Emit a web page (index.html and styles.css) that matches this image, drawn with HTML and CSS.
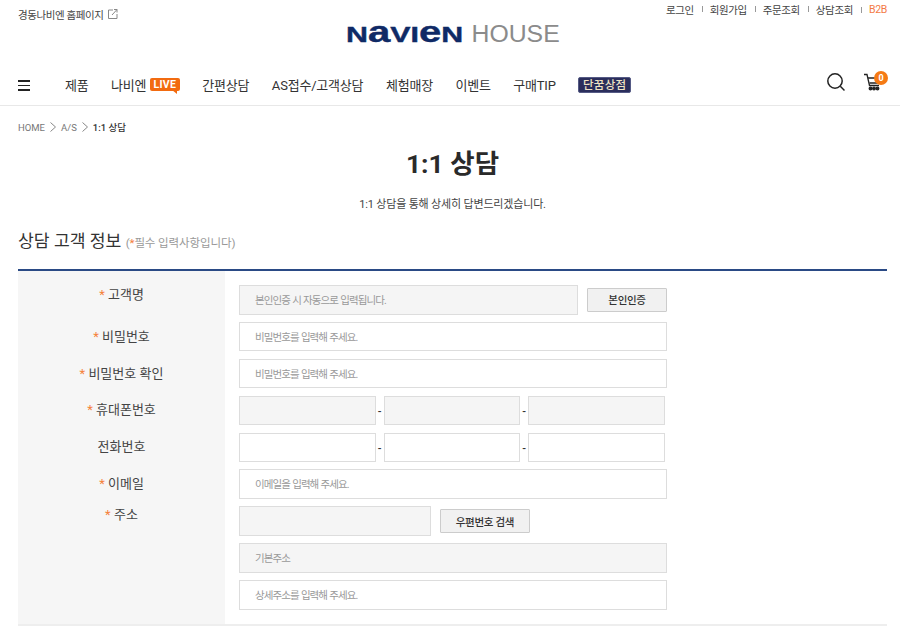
FILE: index.html
```html
<!DOCTYPE html>
<html lang="ko">
<head>
<meta charset="utf-8">
<title>1:1 상담</title>
<link rel="stylesheet" href="styles.css">
</head>
<body>
<header class="site-header">
  <div class="top">
    <a class="home-link">경동나비엔 홈페이지
      <svg class="ext" width="10" height="10" viewBox="0 0 10 10" fill="none" stroke="#888" stroke-width="1"><path d="M5 1H.5v8.500h8.500V5M4 6l5-5.500M6 .5h3v3"/></svg>
    </a>
    <a class="logo"><span class="logo-navien">N<span class="lc">a</span>VI<span class="lc">e</span>N</span><span class="logo-house">HOUSE</span></a>
    <ul class="util">
      <li>로그인</li><li>회원가입</li><li>주문조회</li><li>상담조회</li><li class="b2b">B2B</li>
    </ul>
  </div>
  <nav class="nav">
    <span class="burger"><i></i><i></i><i></i></span>
    <ul class="menu">
      <li>제품</li>
      <li class="live-item">나비엔<span class="live">LIVE</span></li>
      <li>간편상담</li>
      <li>AS접수/고객상담</li>
      <li>체험매장</li>
      <li>이벤트</li>
      <li>구매TIP</li>
      <li><span class="dream">단꿈상점</span></li>
    </ul>
    <div class="nav-icons">
      <svg class="search" width="20" height="20" viewBox="0 0 20 20" fill="none" stroke="#222" stroke-width="1.500"><circle cx="8" cy="8" r="7.200"/><path d="M13.300 13.300l4.200 4.200"/></svg>
      <span class="cart">
        <svg width="18" height="19" viewBox="0 0 18 19" fill="none" stroke="#222" stroke-width="1.300"><path d="M0 1.500h3l2.500 11h9.500"/><path d="M4 5h12.500l-1.500 5H5.500"/><circle cx="6.500" cy="15.500" r="1.300" fill="#222"/><circle cx="10" cy="15.500" r="1.300" fill="#222"/><circle cx="13.500" cy="15.500" r="1.300" fill="#222"/></svg>
        <b class="badge">0</b>
      </span>
    </div>
  </nav>
</header>
<main class="content">
  <ol class="crumbs">
    <li>HOME</li>
    <li class="sep"><svg width="6" height="10" viewBox="0 0 6 10" fill="none" stroke="#888"><path d="M.5.5l5 4.500-5 4.500"/></svg></li>
    <li>A/S</li>
    <li class="sep"><svg width="6" height="10" viewBox="0 0 6 10" fill="none" stroke="#888"><path d="M.5.5l5 4.500-5 4.500"/></svg></li>
    <li class="current">1:1 상담</li>
  </ol>
  <h1 class="title">1:1 상담</h1>
  <p class="lead">1:1 상담을 통해 상세히 답변드리겠습니다.</p>
  <h2 class="section">상담 고객 정보 <small>(<em>*</em>필수 입력사항입니다)</small></h2>
  <form class="form">
    <div class="row row-first">
      <label class="label"><em>*</em> 고객명</label>
      <div class="field">
        <input class="input w-name gray" placeholder="본인인증 시 자동으로 입력됩니다.">
        <button type="button" class="btn btn-auth">본인인증</button>
      </div>
    </div>
    <div class="row">
      <label class="label"><em>*</em> 비밀번호</label>
      <div class="field"><input class="input w-full" placeholder="비밀번호를 입력해 주세요."></div>
    </div>
    <div class="row">
      <label class="label"><em>*</em> 비밀번호 확인</label>
      <div class="field"><input class="input w-full" placeholder="비밀번호를 입력해 주세요."></div>
    </div>
    <div class="row">
      <label class="label"><em>*</em> 휴대폰번호</label>
      <div class="field phone">
        <input class="input gray"><span class="dash">-</span><input class="input gray"><span class="dash">-</span><input class="input gray">
      </div>
    </div>
    <div class="row">
      <label class="label">전화번호</label>
      <div class="field phone">
        <input class="input"><span class="dash">-</span><input class="input"><span class="dash">-</span><input class="input">
      </div>
    </div>
    <div class="row">
      <label class="label"><em>*</em> 이메일</label>
      <div class="field"><input class="input w-full" placeholder="이메일을 입력해 주세요."></div>
    </div>
    <div class="row row-address">
      <label class="label"><em>*</em> 주소</label>
      <div class="field-stack">
        <div class="field">
          <input class="input w-zip gray">
          <button type="button" class="btn btn-zip">우편번호 검색</button>
        </div>
        <input class="input w-full gray" placeholder="기본주소">
        <input class="input w-full" placeholder="상세주소를 입력해 주세요.">
      </div>
    </div>
  </form>
</main>
</body>
</html>
```
FILE: styles.css
```css
* { box-sizing: border-box; }
html, body { margin: 0; padding: 0; }
body {
  width: 900px;
  height: 634px;
  overflow: hidden;
  background: #fff;
  color: #333;
  font-family: Roboto, "Noto Sans CJK KR", sans-serif;
}
ul, ol { list-style: none; margin: 0; padding: 0; }

.site-header { height: 106px; border-bottom: 1px solid #e8e8e8; }
.top {
  display: grid;
  grid-template-columns: 1fr 216px 1fr;
  height: 62px;
  padding: 0 13px 0 18px;
}
.home-link {
  display: flex;
  align-items: center;
  gap: 3px;
  height: 12px;
  margin-top: 8px;
  font-size: 10.5px;
  letter-spacing: -0.4px;
  color: #444;
  white-space: nowrap;
}
.ext { margin-left: 1px; }
.logo {
  display: flex;
  align-items: center;
  justify-content: flex-start;
  height: 24px;
  margin-top: 23px;
  white-space: nowrap;
}
.logo-navien {
  display: inline-block;
  flex: none;
  width: 126px;
  margin-left: 1px;
  font: 700 22px/24px "Liberation Sans", sans-serif;
  color: #0f2a66;
  -webkit-text-stroke: 0.4px #0f2a66;
  transform: scaleX(1.38);
  transform-origin: left center;
}
.logo-navien .lc { font-size: 29px; line-height: 0; }
.logo-house {
  margin-top: -2px;
  font: 400 24.8px/24px "Liberation Sans", sans-serif;
  color: #8b8b8b;
}
.util {
  display: flex;
  justify-content: flex-end;
  align-items: center;
  height: 12px;
  margin-top: 3px;
  font-size: 10.5px;
  letter-spacing: -0.4px;
  color: #444;
}
.util li { white-space: nowrap; }
.util li + li { margin-left: 8px; padding-left: 8px; position: relative; }
.util li + li::before {
  content: "";
  position: absolute;
  left: 0;
  top: 4px;
  width: 1px;
  height: 6px;
  background: #999;
}
.util .b2b { color: #f47a45; letter-spacing: -0.3px; }

.nav {
  display: flex;
  align-items: center;
  height: 43px;
  padding: 0 12px 0 18px;
}
.burger {
  display: flex;
  flex-direction: column;
  gap: 3px;
  width: 12px;
  margin-top: 4px;
  margin-right: 35px;
}
.burger i { display: block; height: 1.5px; background: #222; }
.menu {
  display: flex;
  align-items: center;
  gap: 22.5px;
  margin-top: 2px;
  font-size: 13px;
  letter-spacing: -0.2px;
  color: #333;
  white-space: nowrap;
}
.live-item { display: flex; align-items: center; gap: 3.5px; }
.live {
  position: relative;
  display: block;
  width: 30px;
  height: 13px;
  border-radius: 2px;
  background: #f26b10;
  color: #fff;
  font-size: 10.5px;
  font-weight: 700;
  line-height: 13px;
  text-align: center;
  letter-spacing: 0.3px;
  margin-top: -1px;
}
.live::after {
  content: "";
  position: absolute;
  right: 3px;
  bottom: -3px;
  border-top: 4px solid #f26b10;
  border-left: 5px solid transparent;
}
.dream {
  display: block;
  width: 53px;
  height: 16px;
  border: 1px solid #555a85;
  border-radius: 2px;
  background: #2b2e5c;
  color: #efe3c4;
  font-size: 11.5px;
  font-weight: 500;
  line-height: 14px;
  text-align: center;
  letter-spacing: 0.3px;
}
.nav-icons { display: flex; align-items: flex-start; gap: 17px; margin-left: auto; margin-top: -2px; }
.cart { position: relative; display: block; width: 24px; height: 20px; }
.cart svg { display: block; }
.badge {
  position: absolute;
  right: 0;
  top: -2px;
  width: 14px;
  height: 14px;
  border-radius: 50%;
  background: #f57a14;
  color: #fff;
  font-size: 9px;
  line-height: 14px;
  text-align: center;
}

.content { padding: 0 13px 0 18px; }
.crumbs {
  display: flex;
  align-items: center;
  gap: 5px;
  height: 12px;
  margin-top: 15px;
  font-size: 9.5px;
  color: #777;
}
.crumbs .sep { display: flex; }
.crumbs .current { color: #333; font-weight: 500; }
.title {
  margin: 13px 0 0;
  font-size: 26.5px;
  font-weight: 700;
  line-height: 36px;
  text-align: center;
  letter-spacing: 0;
  color: #2a2a2a;
}
.lead {
  margin: 15px 0 0;
  font-size: 11px;
  line-height: 16px;
  text-align: center;
  letter-spacing: -0.17px;
  color: #444;
}
.section {
  margin: 15px 0 0;
  height: 26px;
  font-size: 17.2px;
  font-weight: 400;
  line-height: 26px;
  color: #333;
}
.section small { font-size: 11.5px; color: #999; letter-spacing: -0.1px; }
em { font-style: normal; color: #f5813a; }

.form {
  margin-top: 15px;
  border-top: 2px solid #2a4a85;
  border-bottom: 2px solid #eeeeee;
  background: linear-gradient(#f6f6f6, #f6f6f6) left top / 207px 100% no-repeat;
  padding: 14px 0 14.5px;
}
.row {
  display: grid;
  grid-template-columns: 207px 1fr;
  align-items: center;
}
.row + .row { margin-top: 7.3px; }
.label {
  text-align: center;
  font-size: 13px;
  line-height: 18px;
  color: #444;
}
.row-first .label { margin-top: -10px; }
.row-address { align-items: start; }
.field { display: flex; align-items: center; margin-left: 14px; }
.field-stack { display: grid; row-gap: 7.3px; }
.field-stack > .input { margin-left: 14px; }
.input {
  display: block;
  height: 29.6px;
  padding: 1px 15px 0;
  border: 1px solid #ddd;
  border-radius: 0;
  background: #fff;
  outline: 0;
  font-family: Roboto, "Noto Sans CJK KR", sans-serif;
  font-size: 10.5px;
  letter-spacing: -0.92px;
  word-spacing: 0.5px;
}
.input::placeholder { color: #999; opacity: 1; }
.gray { background: #f5f5f5; }
.w-full { width: 428px; }
.w-name { width: 339px; }
.w-zip { width: 192px; }
.phone .input { width: 136.5px; }
.dash { width: 8px; padding-top: 3px; font-size: 11px; font-weight: 500; line-height: 10px; text-align: center; color: #333; }
.btn {
  display: block;
  height: 24px;
  padding: 0;
  border: 1px solid #ccc;
  border-radius: 1px;
  background: #f1f1f1;
  color: #333;
  font-family: Roboto, "Noto Sans CJK KR", sans-serif;
  font-size: 10.5px;
  font-weight: 500;
  letter-spacing: -0.3px;
}
.btn-auth { width: 80px; margin-left: 9px; }
.btn-zip { width: 90px; margin-left: 9px; }
```
